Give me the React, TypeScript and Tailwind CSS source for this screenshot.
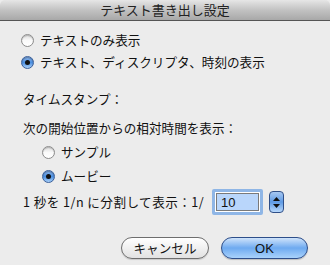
import React from 'react';

const jp = { fontFamily: '"Noto Sans CJK JP", "Liberation Sans", sans-serif' };

function Radio({ checked }: { checked: boolean }) {
  if (checked) {
    return (
      <span className="relative inline-flex h-[13px] w-[13px] shrink-0 items-center justify-center rounded-full border border-[#3a5f9a] bg-gradient-to-b from-[#8fb8ec] via-[#4a8ee0] to-[#a9d0f8] shadow-[inset_0_1px_1px_rgba(0,0,0,0.3)]">
        <span className="h-[5px] w-[5px] rounded-full bg-[#111]" />
      </span>
    );
  }
  return (
    <span className="inline-block h-[13px] w-[13px] shrink-0 rounded-full border border-[#8c8c8c] bg-gradient-to-b from-[#dcdcdc] via-[#fafafa] to-[#ffffff] shadow-[inset_0_1px_1px_rgba(0,0,0,0.2)]" />
  );
}

export default function App() {
  return (
    <div className="h-[265px] w-[330px] overflow-hidden bg-[#ececec] text-[#111]" style={jp}>
      {/* title bar */}
      <div className="flex h-[21px] items-center justify-center rounded-t-[5px] border-b border-[#555] bg-gradient-to-b from-[#e6e6e6] via-[#c2c2c2] to-[#a8a8a8] text-[13px] text-[#222]">
        テキスト書き出し設定
      </div>

      <div className="px-[23px] text-[12.6px] leading-none">
        <div className="ml-[-2px] mt-[13px] flex items-center gap-[6px]">
          <Radio checked={false} />
          <span>テキストのみ表示</span>
        </div>
        <div className="ml-[-2px] mt-[9px] flex items-center gap-[6px]">
          <Radio checked />
          <span>テキスト、ディスクリプタ、時刻の表示</span>
        </div>

        <div className="mt-[24px]">タイムスタンプ：</div>
        <div className="mt-[16px]">次の開始位置からの相対時間を表示：</div>

        <div className="ml-[19px] mt-[12px] flex items-center gap-[6px]">
          <Radio checked={false} />
          <span>サンプル</span>
        </div>
        <div className="ml-[19px] mt-[11px] flex items-center gap-[6px]">
          <Radio checked />
          <span>ムービー</span>
        </div>

        <div className="mt-[6px] flex items-center">
          <span className="tracking-[0.45px]">1 秒を 1/n に分割して表示：1/</span>
          <div className="ml-[8px] flex h-[26px] w-[51px] items-center rounded-[2px] border-[3px] border-[#8fb6e6] bg-white p-[1px]">
            <div className="flex h-full w-full items-center border border-[#7a7a7a] bg-[#b9d6fb] pl-[4px] text-[13px]" style={{ fontFamily: '"Liberation Sans", sans-serif' }}>
              10
            </div>
          </div>
          <div className="ml-[6px] flex h-[22px] w-[15px] flex-col items-center justify-center gap-[3px] rounded-[4px] border border-[#2f4f88] bg-gradient-to-b from-[#a7c8f2] via-[#5e9ae4] to-[#b8d8fb]">
            <svg width="7" height="4" viewBox="0 0 7 4"><path d="M3.5 0L7 4H0z" fill="#111" /></svg>
            <svg width="7" height="4" viewBox="0 0 7 4"><path d="M0 0h7L3.5 4z" fill="#111" /></svg>
          </div>
        </div>

        <div className="mr-[-1px] mt-[22px] flex justify-end gap-[12px]">
          <button className="flex h-[22px] w-[88px] items-center justify-center rounded-full border border-[#6e6e6e] bg-gradient-to-b from-[#ffffff] via-[#f0f0f0] to-[#e2e2e2] text-[12.6px] shadow-[0_1px_1px_rgba(0,0,0,0.15)]">
            キャンセル
          </button>
          <button className="flex h-[22px] w-[87px] items-center justify-center rounded-full border border-[#2d4e8a] bg-gradient-to-b from-[#cfe3fa] via-[#6eaaf0] to-[#a9d2fb] text-[13px] shadow-[0_1px_1px_rgba(0,0,0,0.2)]" style={{ fontFamily: '"Liberation Sans", sans-serif' }}>
            OK
          </button>
        </div>
      </div>
    </div>
  );
}
